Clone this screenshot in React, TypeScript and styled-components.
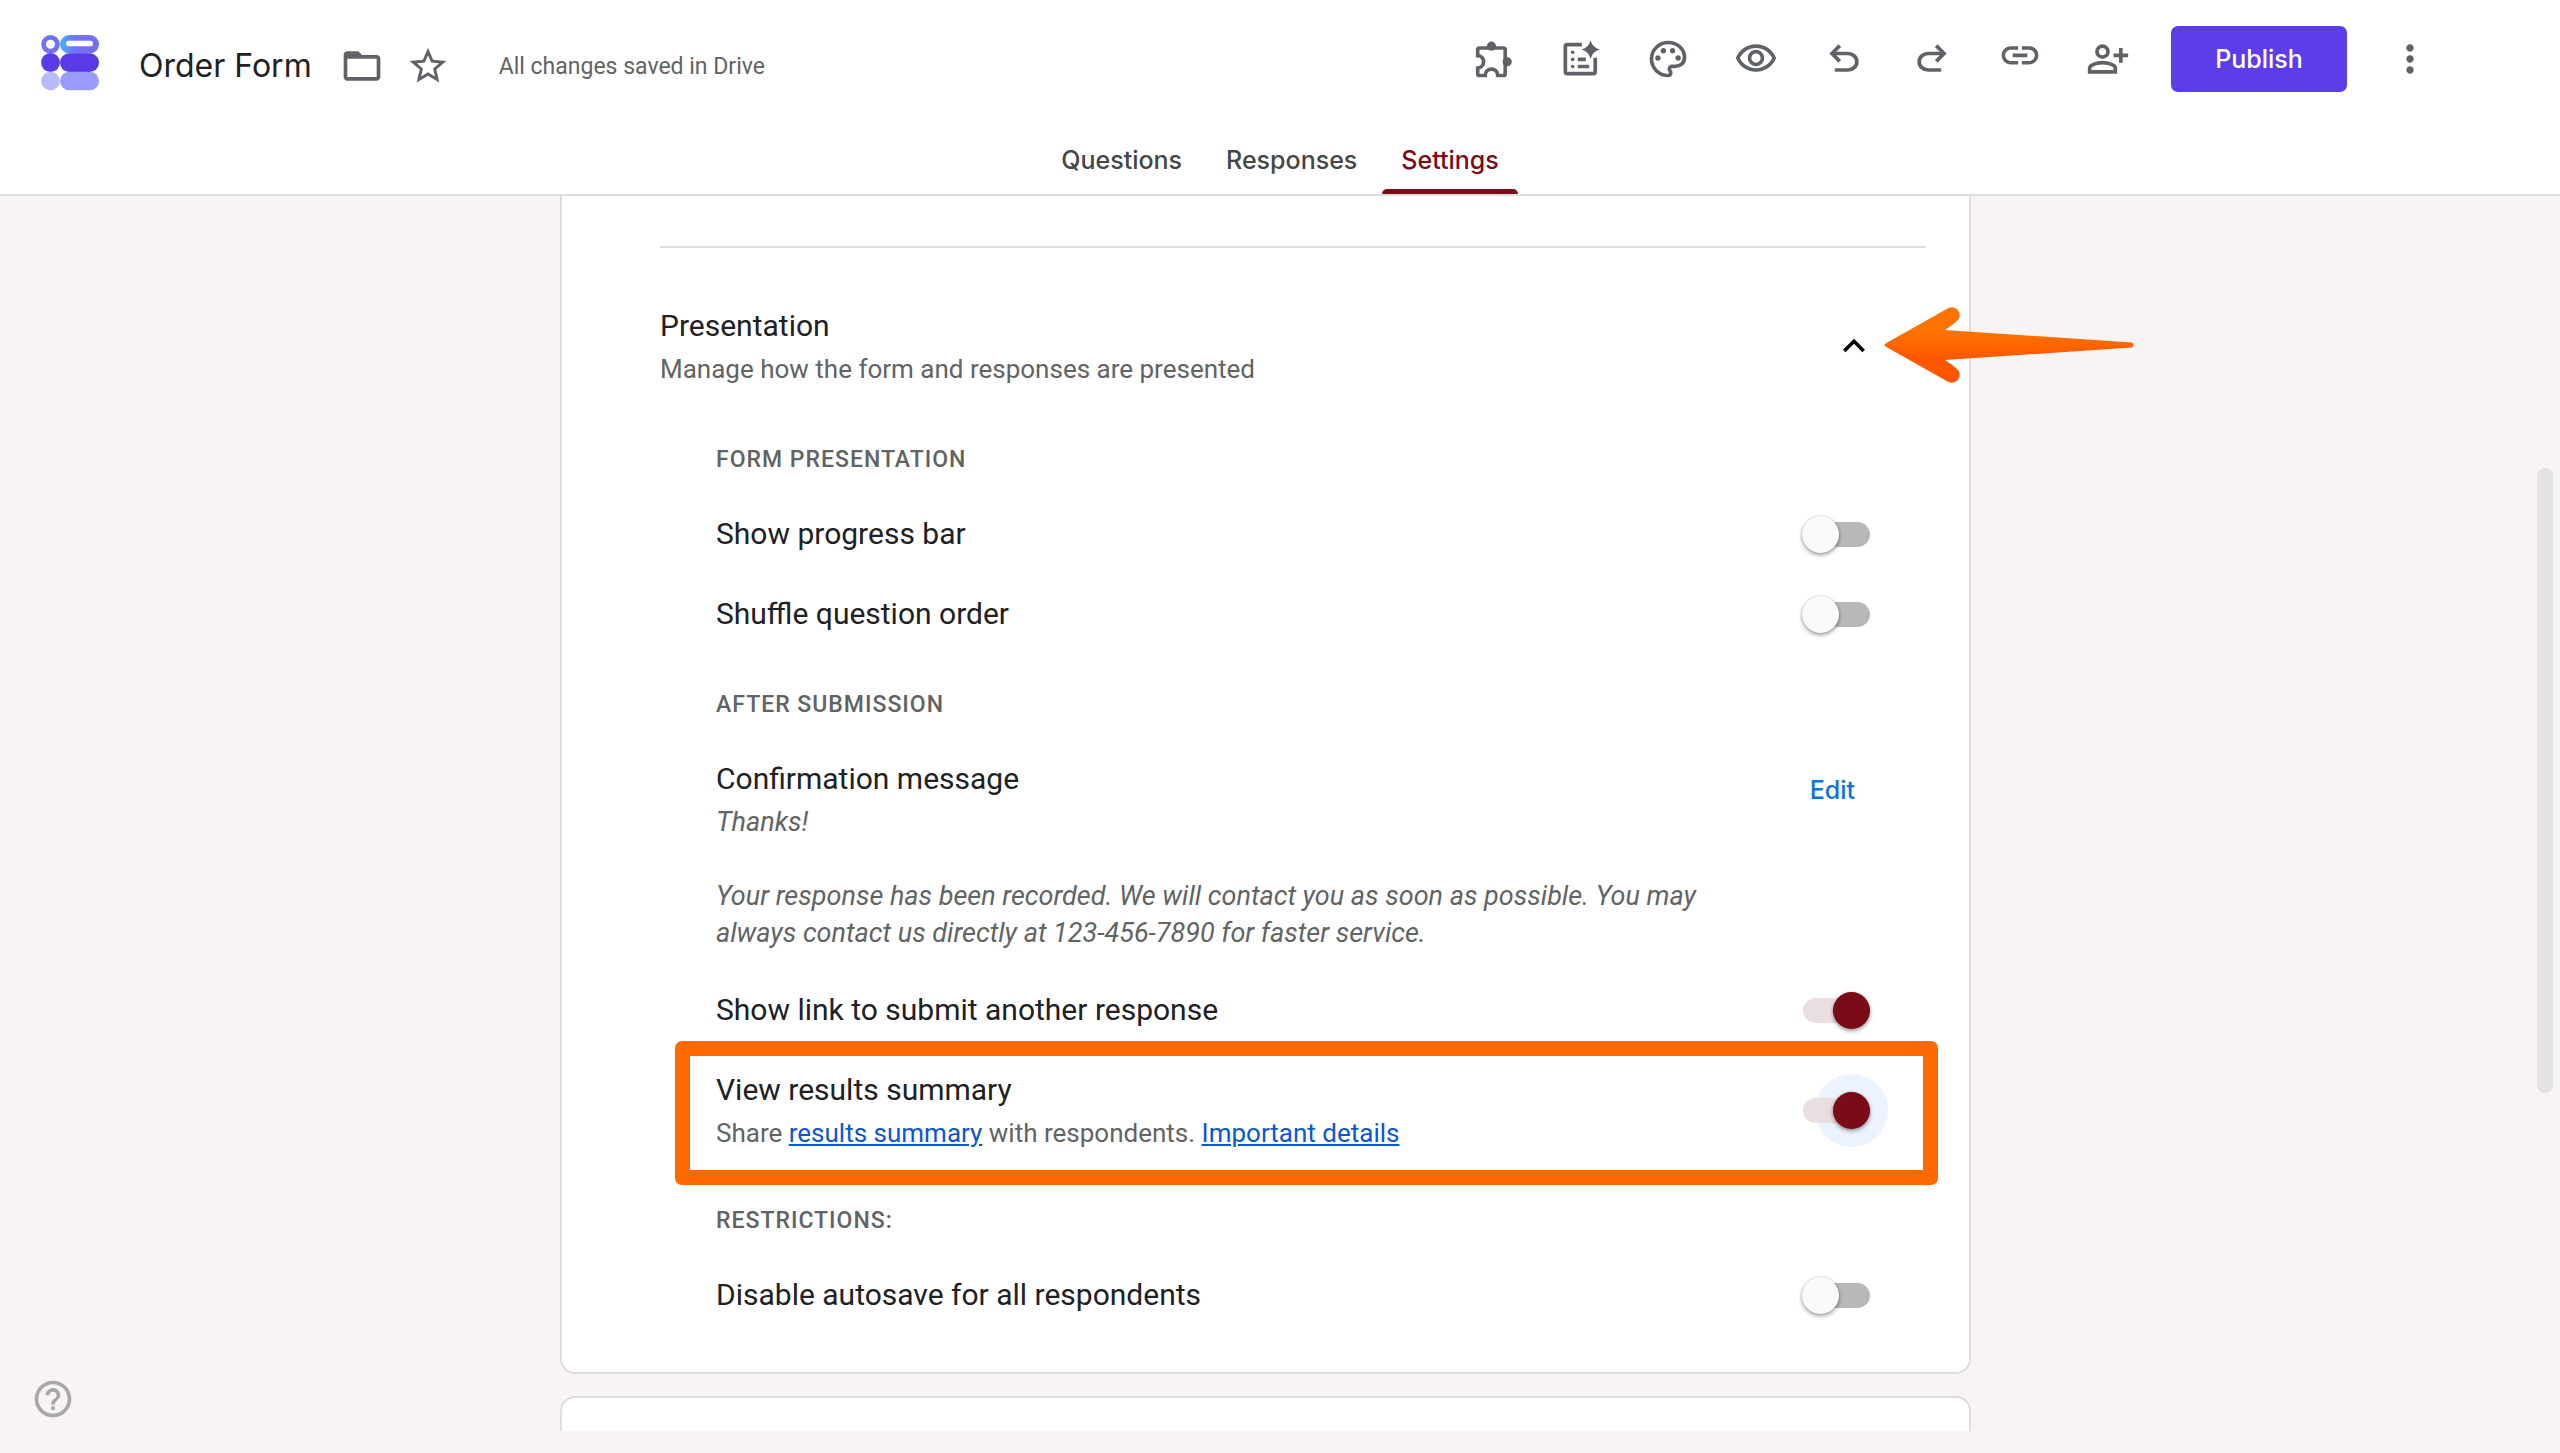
import React, { useState } from "react";
import styled, { createGlobalStyle, css } from "styled-components";

const colors = {
  page: "#f7f4f3",
  line: "#dedddd",
  text: "#202124",
  muted: "#616365",
  icon: "#5f6368",
  accent: "#790c17",
  accentTrack: "#eadfe0",
  brand: "#5c3de9",
  link: "#0b57d0",
  action: "#0b73da",
  marker: "#ff6a00",
};

const sans = `Roboto, "Liberation Sans", sans-serif`;
const display = `Inter, Roboto, "Liberation Sans", sans-serif`;

const GlobalStyle = createGlobalStyle`
  *, *::before, *::after { box-sizing: border-box; }
  body { margin: 0; background: ${colors.page}; font-family: ${sans}; color: ${colors.text}; }
  button { border: 0; background: none; padding: 0; font: inherit; color: inherit; cursor: pointer; }
  h1, h2, h3, p { margin: 0; font-weight: 400; }
`;

const Page = styled.div`
  position: relative;
  display: flex;
  flex-direction: column;
  height: 100vh;
  overflow: hidden;
`;

const Header = styled.header`
  flex: none;
  background: #fff;
  border-bottom: 2px solid ${colors.line};
`;

const TopRow = styled.div`
  display: flex;
  justify-content: space-between;
  align-items: flex-start;
  height: 132px;
  padding: 0 128px 0 41px;
`;

const TitleGroup = styled.div`
  display: flex;
  align-items: center;
  height: 132px;
`;

const FormTitle = styled.h1`
  margin: 0 28px 0 40px;
  font: 400 32px/44px ${display};
  white-space: nowrap;
`;

const TitleActions = styled.div`
  display: flex;
  gap: 22px;
  margin-right: 49px;
`;

const SaveState = styled.span`
  font-size: 23px;
  line-height: 37px;
  color: ${colors.muted};
  white-space: nowrap;
`;

const Toolbar = styled.div`
  display: flex;
  align-items: center;
  height: 118px;
`;

const IconButton = styled.button<{ $width?: number }>`
  display: flex;
  align-items: center;
  justify-content: center;
  width: ${({ $width = 44 }) => $width}px;
  height: 44px;
  color: ${colors.icon};
`;

const Glyph = styled.svg`
  display: block;
  width: 44px;
  height: 44px;
  fill: currentColor;
`;

const PublishButton = styled.button`
  width: 176px;
  height: 66px;
  margin: 0 41px 0 19px;
  border-radius: 7px;
  background: ${colors.brand};
  color: #fff;
  font: 500 25px/44px ${display};
`;

const Tabs = styled.nav`
  display: flex;
  justify-content: center;
  height: 62px;
`;

const Tab = styled.button<{ $active: boolean }>`
  display: flex;
  flex-direction: column;
  padding: 0 3px;
  font: 500 25px/57px ${display};
  color: ${({ $active }) => ($active ? colors.accent : "#444746")};

  span {
    padding: 0 19px;
  }

  &::after {
    content: "";
    width: 100%;
    height: 5px;
    border-radius: 5px 5px 0 0;
    background: ${({ $active }) => ($active ? colors.accent : "transparent")};
  }
`;

const Viewport = styled.div`
  display: flex;
  flex: 1;
  min-height: 0;
  margin-bottom: 22px;
  overflow: hidden;
`;

const Content = styled.main`
  display: flex;
  flex: 1;
  flex-direction: column;
  align-items: center;
  gap: 22px;
`;

const cardFrame = css`
  flex: none;
  width: 100%;
  max-width: 1411px;
  border: 2px solid ${colors.line};
  background: #fff;
`;

const Card = styled.section`
  ${cardFrame}
  border-top: 0;
  border-radius: 0 0 15px 15px;
  padding: 50px 43px 55px 98px;
`;

const NextCard = styled.section`
  ${cardFrame}
  height: 180px;
  border-radius: 15px 15px 0 0;
`;

const Divider = styled.hr`
  height: 2px;
  margin: 0 0 56px;
  border: 0;
  background: ${colors.line};
`;

const SectionHead = styled.div`
  position: relative;
  display: flex;
  justify-content: space-between;
  align-items: center;
  margin-bottom: 54px;
  padding-right: 50px;
`;

const primaryText = css`
  font-size: 30px;
  line-height: 44px;
`;

const SectionTitle = styled.h2`
  ${primaryText}
`;

const Description = styled.div`
  margin-top: 3px;
  font-size: 26px;
  line-height: 37px;
  color: ${colors.muted};
`;

const Message = styled(Description)`
  font-size: 27px;
  font-style: italic;
`;

const CollapseButton = styled(IconButton)`
  color: #000;
`;

const Pointer = styled.svg`
  position: absolute;
  top: 1px;
  left: calc(100% - 44px);
  width: 252px;
  height: 80px;
`;

const Groups = styled.div`
  display: flex;
  flex-direction: column;
  gap: 51px;
  padding: 0 56px;
`;

const Group = styled.section`
  display: flex;
  flex-direction: column;
  gap: 36px;
`;

const GroupLabel = styled.h3`
  margin-bottom: -2px;
  font-size: 23px;
  font-weight: 500;
  line-height: 36px;
  letter-spacing: 1px;
  text-transform: uppercase;
  color: ${colors.muted};
`;

const Row = styled.div<{ $top?: boolean; $marked?: boolean }>`
  position: relative;
  display: flex;
  justify-content: space-between;
  align-items: ${({ $top }) => ($top ? "flex-start" : "center")};

  ${({ $marked }) =>
    $marked &&
    css`
      &::after {
        content: "";
        position: absolute;
        inset: -27px -68px -33px -41px;
        border: 15px solid ${colors.marker};
        border-radius: 7px;
        pointer-events: none;
      }
    `}
`;

const RowText = styled.div`
  max-width: 1000px;
`;

const RowLabel = styled.label`
  display: block;
  ${primaryText}
`;

const RowHeading = styled.h4`
  margin: 0;
  font-weight: 400;
  ${primaryText}
`;

const TextLink = styled.a`
  color: ${colors.link};
  text-decoration: underline;
`;

const EditButton = styled.button`
  height: 66px;
  padding: 0 15px;
  font: 500 25px/66px ${display};
  color: ${colors.action};
`;

const ToggleBox = styled.span<{ $halo?: boolean }>`
  position: relative;
  display: flex;
  flex: none;

  ${({ $halo }) =>
    $halo &&
    css`
      &::before {
        content: "";
        position: absolute;
        top: -24px;
        right: -18px;
        width: 73px;
        height: 73px;
        border-radius: 50%;
        background: #ecf3fe;
      }
    `}
`;

const ToggleInput = styled.input`
  appearance: none;
  position: relative;
  width: 67px;
  height: 25px;
  margin: 0;
  border-radius: 13px;
  background: #b8b8b8;
  cursor: pointer;

  &::before {
    content: "";
    position: absolute;
    top: -6px;
    left: -1px;
    width: 37px;
    height: 37px;
    border-radius: 50%;
    background: #fafafa;
    box-shadow: 0 2px 4px rgba(0, 0, 0, 0.4), 0 0 2px rgba(0, 0, 0, 0.12);
  }

  &:checked {
    background: ${colors.accentTrack};
  }

  &:checked::before {
    left: 30px;
    background: ${colors.accent};
  }
`;

const ScrollTrack = styled.div`
  flex: none;
  width: 29px;
  padding: 272px 7px 0 6px;
`;

const ScrollThumb = styled.div`
  height: 625px;
  border-radius: 8px;
  background: #e2e2e0;
`;

const HelpButton = styled(IconButton)`
  position: absolute;
  left: 31px;
  bottom: 32px;
  color: #a9a8a8;
`;

const symbol = "0 -960 960 960";

type ToolIcon = { label: string; viewBox?: string; art: React.ReactNode };

const tools: ToolIcon[] = [
  {
    label: "Add-ons",
    art: (
      <>
        <path
          fill="none"
          stroke="currentColor"
          strokeWidth="2"
          d="M4.2 10.2V7a1 1 0 0 1 1-1h13a1 1 0 0 1 1 1v13a1 1 0 0 1-1 1h-3.1c0-2.1-1.5-3.5-3.4-3.5S8.3 18.9 8.3 21H5.2a1 1 0 0 1-1-1v-3.1c2-.1 3.2-1.5 3.2-3.4s-1.2-3.2-3.2-3.3z"
        />
        <circle cx="11.7" cy="5" r="2.5" />
        <circle cx="20.3" cy="13.5" r="2.5" />
      </>
    ),
  },
  {
    label: "Help me create",
    art: (
      <>
        <path
          fill="none"
          stroke="currentColor"
          strokeWidth="2"
          d="M13 4.2H5a1 1 0 0 0-1 1V19a1 1 0 0 0 1 1h14.3a1 1 0 0 0 1-1v-7.7"
        />
        <path d="M17.8 1.9q1.1 3.8 5 4.9-3.9 1.1-5 5-1.1-3.900-5-5 3.900-1.100 5-4.900z" />
        <circle cx="8" cy="8.3" r="1" />
        <circle cx="8" cy="12.2" r="1" />
        <circle cx="8" cy="16.1" r="1" />
        <path d="M10.8 11.2h4.4v2h-4.4zM10.8 15.1h6.2v2h-6.2z" />
      </>
    ),
  },
  {
    label: "Customize theme",
    viewBox: symbol,
    art: (
      <path d="M480-80q-82 0-155-31.5t-127.5-86Q143-252 111.5-325T80-480q0-83 32.5-156t88-127Q256-817 330-848.5T488-880q80 0 151 27.5t124.5 76q53.5 48.5 85 115T880-518q0 115-70 176.5T640-280h-74q-9 0-12.5 5t-3.5 11q0 12 15 34.5t15 51.5q0 50-27.5 74T480-80Zm-177-377q17-17 17-43t-17-43q-17-17-43-17t-43 17q-17 17-17 43t17 43q17 17 43 17t43-17Zm120-160q17-17 17-43t-17-43q-17-17-43-17t-43 17q-17 17-17 43t17 43q17 17 43 17t43-17Zm200 0q17-17 17-43t-17-43q-17-17-43-17t-43 17q-17 17-17 43t17 43q17 17 43 17t43-17Zm120 160q17-17 17-43t-17-43q-17-17-43-17t-43 17q-17 17-17 43t17 43q17 17 43 17t43-17ZM480-160q9 0 14.5-5t5.5-13q0-14-15-33t-15-57q0-42 29-67t71-25h70q66 0 113-38.5T800-518q0-121-92.5-201.5T488-800q-136 0-232 93t-96 227q0 133 93.5 226.5T480-160Z" />
    ),
  },
  {
    label: "Preview",
    art: (
      <path d="M12 6c3.79 0 7.17 2.13 8.82 5.5C19.17 14.87 15.79 17 12 17s-7.17-2.13-8.82-5.5C4.83 8.13 8.21 6 12 6m0-2C7 4 2.73 7.11 1 11.5 2.73 15.89 7 19 12 19s9.27-3.11 11-7.5C21.27 7.11 17 4 12 4zm0 5c1.38 0 2.5 1.12 2.5 2.5S13.38 14 12 14s-2.5-1.12-2.5-2.5S10.62 9 12 9m0-2c-2.48 0-4.5 2.02-4.5 4.5S9.52 16 12 16s4.5-2.02 4.5-4.5S14.48 7 12 7z" />
    ),
  },
  {
    label: "Undo",
    viewBox: symbol,
    art: (
      <path d="M280-200v-80h284q63 0 109.5-40T720-420q0-60-46.5-100T564-560H312l104 104-56 56-200-200 200-200 56 56-104 104h252q97 0 166.5 63T800-420q0 94-69.5 157T564-200H280Z" />
    ),
  },
  {
    label: "Redo",
    viewBox: symbol,
    art: (
      <path d="M396-200q-97 0-166.5-63T160-420q0-94 69.5-157T396-640h252L544-744l56-56 200 200-200 200-56-56 104-104H396q-63 0-109.5 40T240-420q0 60 46.5 100T396-280h284v80H396Z" />
    ),
  },
  {
    label: "Copy responder link",
    viewBox: "0 2 24 24",
    art: (
      <path d="M3.9 12c0-1.71 1.39-3.1 3.1-3.1h4V7H7c-2.76 0-5 2.24-5 5s2.24 5 5 5h4v-1.9H7c-1.71 0-3.1-1.39-3.1-3.1zM8 13h8v-2H8v2zm9-6h-4v1.9h4c1.71 0 3.1 1.39 3.1 3.1s-1.39 3.1-3.1 3.1h-4V17h4c2.76 0 5-2.24 5-5s-2.24-5-5-5z" />
    ),
  },
  {
    label: "Share",
    viewBox: symbol,
    art: (
      <path d="M720-400v-120H600v-80h120v-120h80v120h120v80H800v120h-80Zm-360-80q-66 0-113-47t-47-113q0-66 47-113t113-47q66 0 113 47t47 113q0 66-47 113t-113 47ZM40-160v-112q0-34 17.5-62.5T104-378q62-31 126-46.5T360-440q66 0 130 15.5T616-378q29 15 46.5 43.5T680-272v112H40Zm80-80h480v-32q0-11-5.5-20T580-306q-54-27-109-40.5T360-360q-56 0-111 13.5T140-306q-9 5-14.5 14t-5.5 20v32Zm296.5-343.5Q440-607 440-640t-23.5-56.5Q393-720 360-720t-56.5 23.5Q280-673 280-640t23.5 56.5Q327-560 360-560t56.5-23.5Z" />
    ),
  },
];

const LogoMark = styled.svg`
  display: block;
  width: 58px;
  height: 62px;
`;

function Logo() {
  return (
    <LogoMark viewBox="0 0 58 62" aria-hidden="true">
      <defs>
        <linearGradient id="logo-pill" x1="0" x2="1">
          <stop offset="0" stopColor="#43b4ff" />
          <stop offset="0.4" stopColor="#7370f6" />
        </linearGradient>
      </defs>
      <circle cx="9.5" cy="9.3" r="6.9" fill="none" stroke="#7370f6" strokeWidth="4.8" />
      <rect x="19" width="39" height="18.5" rx="9.2" fill="url(#logo-pill)" />
      <rect x="25" y="5.8" width="27" height="5.4" rx="2.7" fill="#fff" />
      <circle cx="9.5" cy="27.5" r="9.4" fill="#5a3ae6" />
      <rect x="19" y="18.2" width="39" height="18.7" rx="9.2" fill="#5a3ae6" />
      <circle cx="9.5" cy="46" r="9.3" fill="#b6bcfc" />
      <rect x="19" y="36.7" width="39" height="18.5" rx="9.2" fill="#979cfd" />
    </LogoMark>
  );
}

function Toggle({ id, on = false, halo = false }: { id: string; on?: boolean; halo?: boolean }) {
  const [checked, setChecked] = useState(on);
  return (
    <ToggleBox $halo={halo}>
      <ToggleInput
        id={id}
        type="checkbox"
        role="switch"
        checked={checked}
        onChange={(e) => setChecked(e.target.checked)}
      />
    </ToggleBox>
  );
}

function ToggleRow(props: {
  id: string;
  label: string;
  on?: boolean;
  marked?: boolean;
  children?: React.ReactNode;
}) {
  return (
    <Row $marked={props.marked}>
      <RowText>
        <RowLabel htmlFor={props.id}>{props.label}</RowLabel>
        {props.children}
      </RowText>
      <Toggle id={props.id} on={props.on} halo={props.marked} />
    </Row>
  );
}

export default function App() {
  const [tab, setTab] = useState("Settings");
  return (
    <Page>
      <GlobalStyle />
      <Header>
        <TopRow>
          <TitleGroup>
            <Logo />
            <FormTitle>Order Form</FormTitle>
            <TitleActions>
              <IconButton aria-label="Move to folder">
                <Glyph viewBox="0 0 24 24">
                  <path d="M20 6h-8l-2-2H4c-1.1 0-2 .9-2 2v12c0 1.1.9 2 2 2h16c1.1 0 2-.9 2-2V8c0-1.1-.9-2-2-2zm0 12H4V8h16v10z" />
                </Glyph>
              </IconButton>
              <IconButton aria-label="Star">
                <Glyph viewBox="0 0 24 24">
                  <path d="M22 9.24l-7.19-.62L12 2 9.19 8.63 2 9.24l5.46 4.73L5.82 21 12 17.27 18.18 21l-1.63-7.03L22 9.24zM12 15.4l-3.76 2.27 1-4.28-3.32-2.88 4.38-.38L12 6.1l1.71 4.04 4.38.38-3.32 2.88 1 4.28L12 15.4z" />
                </Glyph>
              </IconButton>
            </TitleActions>
            <SaveState>All changes saved in Drive</SaveState>
          </TitleGroup>
          <Toolbar>
            {tools.map((tool) => (
              <IconButton key={tool.label} $width={88} aria-label={tool.label}>
                <Glyph viewBox={tool.viewBox ?? "0 0 24 24"}>{tool.art}</Glyph>
              </IconButton>
            ))}
            <PublishButton>Publish</PublishButton>
            <IconButton aria-label="More">
              <Glyph viewBox="0 0 24 24">
                <path d="M12 8c1.1 0 2-.9 2-2s-.9-2-2-2-2 .9-2 2 .9 2 2 2zm0 2c-1.1 0-2 .9-2 2s.9 2 2 2 2-.9 2-2-.9-2-2-2zm0 6c-1.1 0-2 .9-2 2s.9 2 2 2 2-.9 2-2-.9-2-2-2z" />
              </Glyph>
            </IconButton>
          </Toolbar>
        </TopRow>
        <Tabs>
          {["Questions", "Responses", "Settings"].map((name) => (
            <Tab key={name} $active={tab === name} onClick={() => setTab(name)}>
              <span>{name}</span>
            </Tab>
          ))}
        </Tabs>
      </Header>

      <Viewport>
        <Content>
          <Card>
            <Divider />
            <SectionHead>
              <div>
                <SectionTitle>Presentation</SectionTitle>
                <Description>Manage how the form and responses are presented</Description>
              </div>
              <CollapseButton aria-label="Collapse section" aria-expanded="true">
                <Glyph viewBox="0 0 24 24">
                  <path d="M12 8l-6 6 1.41 1.41L12 10.83l4.59 4.58L18 14z" />
                </Glyph>
              </CollapseButton>
              <Pointer viewBox="0 0 252 80" aria-hidden="true">
                <defs>
                  <linearGradient id="pointer-fill" x1="0" x2="0" y1="0" y2="1">
                    <stop offset="0.3" stopColor="#ff7400" />
                    <stop offset="0.7" stopColor="#ff5600" />
                  </linearGradient>
                </defs>
                <path
                  fill="url(#pointer-fill)"
                  d="M3.5 38.5 66 3.2C74-1.2 81.5 9 75.5 15.5 72 19 67 22 63 25L250 37.5q3 2.5 0 5L63 55c4 3 9 6 12.5 9.5C81.5 71 74 81.2 66 76.8L3.5 41.500q-2-1.500 0-3z"
                />
              </Pointer>
            </SectionHead>

            <Groups>
              <Group>
                <GroupLabel>Form presentation</GroupLabel>
                <ToggleRow id="progress" label="Show progress bar" />
                <ToggleRow id="shuffle" label="Shuffle question order" />
              </Group>
              <Group>
                <GroupLabel>After submission</GroupLabel>
                <Row $top>
                  <RowText>
                    <RowHeading>Confirmation message</RowHeading>
                    <Message>
                      Thanks!
                      <br />
                      <br />
                      Your response has been recorded. We will contact you as soon as possible. You may
                      always contact us directly at 123-456-7890 for faster service.
                    </Message>
                  </RowText>
                  <EditButton>Edit</EditButton>
                </Row>
                <ToggleRow id="another" label="Show link to submit another response" on />
                <ToggleRow id="summary" label="View results summary" on marked>
                  <Description>
                    Share <TextLink href="#summary">results summary</TextLink> with respondents.{" "}
                    <TextLink href="#details">Important details</TextLink>
                  </Description>
                </ToggleRow>
              </Group>
              <Group>
                <GroupLabel>Restrictions:</GroupLabel>
                <ToggleRow id="autosave" label="Disable autosave for all respondents" />
              </Group>
            </Groups>
          </Card>
          <NextCard />
        </Content>
        <ScrollTrack>
          <ScrollThumb />
        </ScrollTrack>
      </Viewport>

      <HelpButton aria-label="Help">
        <Glyph viewBox="0 0 24 24">
          <path d="M11 18h2v-2h-2v2zm1-16C6.48 2 2 6.48 2 12s4.48 10 10 10 10-4.48 10-10S17.52 2 12 2zm0 18c-4.41 0-8-3.59-8-8s3.59-8 8-8 8 3.59 8 8-3.59 8-8 8zm0-14c-2.21 0-4 1.79-4 4h2c0-1.1.9-2 2-2s2 .9 2 2c0 2-3 1.75-3 5h2c0-2.25 3-2.5 3-5 0-2.21-1.79-4-4-4z" />
        </Glyph>
      </HelpButton>
    </Page>
  );
}
